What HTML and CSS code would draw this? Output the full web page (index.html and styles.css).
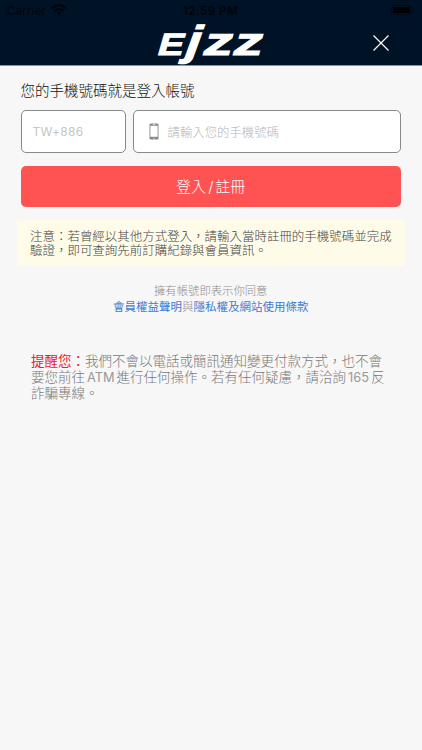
FILE: index.html
```html
<!DOCTYPE html>
<html lang="zh-Hant">
<head>
<meta charset="utf-8">
<title>Ejzz</title>
<link rel="stylesheet" href="styles.css">
</head>
<body>
<header class="header">
  <div class="status">
    <div class="carrier">Carrier
      <svg class="wifi" width="16" height="12" viewBox="0 0 16 12" fill="none" stroke="currentColor" stroke-width="2.2"><path d="M1 4.4C5 .2 11 .2 15 4.4M3.5 7.2c2.6-2.6 6.4-2.6 9 0"/><path d="M5.7 9Q8 7 10.3 9L8 11.3z" fill="currentColor" stroke="none"/></svg>
    </div>
    <time>12:59 PM</time>
    <svg class="battery" width="24" height="12" viewBox="0 0 24 12"><rect x=".5" y=".5" width="20" height="9" rx="2.5" fill="none" stroke="#000918"/><rect x="2" y="2" width="17" height="6" rx="1" fill="#000"/><path d="M22 3.5v3q2-1.5 0-3" fill="#000918"/></svg>
  </div>
  <div class="nav">
    <svg class="logo" width="110" height="42" viewBox="0 0 110 42">
      <g transform="translate(0 32.5)">
        <text class="cap" transform="translate(0 0) skewX(-16) scale(1.28 1.03)">E</text>
        <text class="low" transform="translate(26.5 0) skewX(-20) scale(1.4 1.1)">j</text>
        <text class="low" transform="translate(45 0) skewX(-16) scale(1.54 1.03)">z</text>
        <text class="low" transform="translate(75 0) skewX(-16) scale(1.54 1.03)">z</text>
      </g>
    </svg>
    <button class="close" aria-label="關閉"><svg width="18" height="18" viewBox="0 0 18 18"><path d="M1.5 1.5l15 15M16.5 1.5l-15 15" stroke="#fff" stroke-width="1.2"/></svg></button>
  </div>
</header>
<main class="main">
  <h1 class="title">您的手機號碼就是登入帳號</h1>
  <div class="fields">
    <div class="field code">TW+886</div>
    <div class="field phone">
      <svg width="10" height="17" viewBox="0 0 10 17"><rect x=".5" y=".5" width="9" height="16" rx="1.3" fill="#898989"/><path d="M1.4 2.8h7.2v11H1.4z" fill="#fff"/><path d="M3.8 1.6h2.4M4.4 15.2h1.2" stroke="#fff" stroke-width=".7"/></svg>
      <span>請輸入您的手機號碼</span>
    </div>
  </div>
  <button class="submit">登入<span class="slash">/</span>註冊</button>
  <p class="note">注意：若曾經以其他方式登入，請輸入當時註冊的手機號碼並完成<br>驗證，即可查詢先前訂購紀錄與會員資訊。</p>
  <p class="agree">擁有帳號即表示你同意</p>
  <p class="terms"><a>會員權益聲明</a>與<a>隱私權及網站使用條款</a></p>
  <p class="reminder"><strong>提醒您：</strong>我們不會以電話或簡訊通知變更付款方式，也不會<br>要您前往<span class="latin">ATM</span>進行任何操作。若有任何疑慮，請洽詢<span class="latin">165</span>反<br>詐騙專線。</p>
</main>
</body>
</html>
```
FILE: styles.css
```css
* { box-sizing: border-box; }
body {
  margin: 0;
  min-height: 750px;
  background: #f7f7f7;
  color: #444;
  font-family: Inter, "Noto Sans CJK TC", sans-serif;
}
p, h1 { margin: 0; font-weight: 300; white-space: nowrap; }
button { border: 0; padding: 0; font: inherit; }
.header {
  height: 66px;
  background: #001226;
  border-bottom: 1px solid #8a929b;
}
.status {
  height: 22px;
  padding: 0 8px 0 7px;
  display: grid;
  grid-template-columns: 1fr auto 1fr;
  align-items: center;
  color: #00040c;
  font-size: 11.5px;
  line-height: 22px;
}
.carrier { display: flex; align-items: center; gap: 5px; letter-spacing: .2px; }
.wifi { margin-top: -2px; }
.status time { font-weight: 600; letter-spacing: .5px; }
.battery { justify-self: end; margin-right: -1px; }
.nav {
  height: 42px;
  display: grid;
  grid-template-columns: 1fr 110px 1fr;
  align-items: center;
  padding: 0 32px;
}
.logo { grid-column: 2; overflow: visible; }
.logo text {
  fill: #fff;
  stroke: #fff;
  stroke-width: 1px;
  font-family: "Liberation Sans", sans-serif;
  font-weight: 700;
}
.cap { font-size: 30px; }
.low { font-size: 38px; }
.close { justify-self: end; width: 18px; height: 18px; background: none; }
.close svg { display: block; }
.main { padding: 14px 21px 0 20.5px; }
.title { height: 24px; font-size: 14.5px; line-height: 22px; color: #111; }
.fields { display: grid; grid-template-columns: 105px 1fr; gap: 7px; margin-top: 6px; }
.field {
  height: 43px;
  display: flex;
  align-items: center;
  border: 1px solid #898989;
  border-radius: 5px;
  background: #fff;
  color: #b6b6b8;
  font-size: 12.4px;
  font-weight: 300;
}
.code { padding-left: 11px; font-size: 12px; font-weight: 400; letter-spacing: .3px; color: #c4c4c6; }
.phone { padding-left: 15px; gap: 9px; }
.submit {
  display: block;
  width: 100%;
  height: 41px;
  margin-top: 13px;
  border-radius: 5px;
  background: #ff5353;
  color: #fff;
  font-size: 15px;
  font-weight: 300;
  line-height: 41px;
}
.slash { margin: 0 2px; }
.note {
  height: 46px;
  margin: 13px -4px 0;
  padding: 10px 13.5px 0;
  background: #fefbe9;
  color: #444;
  font-size: 12.47px;
  line-height: 14.2px;
}
.agree, .terms { text-align: center; color: #8e8e8e; line-height: 16px; }
.agree { margin-top: 17px; font-size: 11.35px; }
.terms { font-size: 11.5px; }
.terms a { color: #407bd0; font-weight: 400; }
.reminder {
  margin: 39px 0 0 10.5px;
  color: #777;
  font-size: 13.5px;
  line-height: 15.8px;
}
.reminder strong { color: #e02525; font-weight: 400; }
.latin { margin: 0 2px; font-size: 12.8px; font-weight: 400; color: #999; }
```
